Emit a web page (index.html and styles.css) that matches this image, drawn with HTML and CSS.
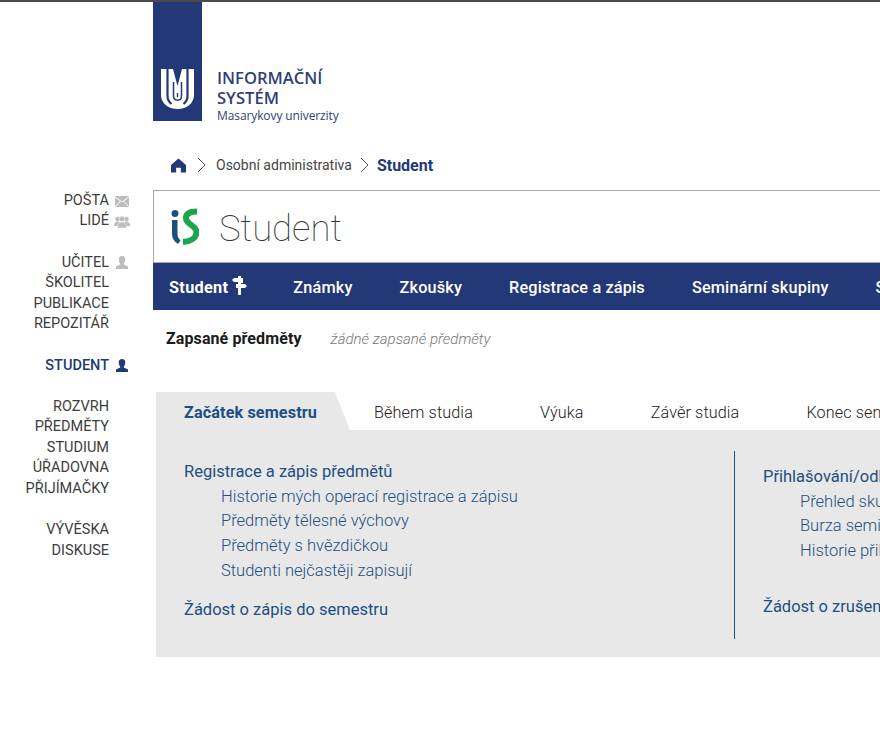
FILE: index.html
```html
<!DOCTYPE HTML>
<html lang="cs">
<head>
	<meta http-equiv="Content-Type" content="text/html; charset=utf-8">
	<title>Student</title>
	<link rel="stylesheet" href="styles.css">
</head>
<body>
<div class="page">
	<div class="side">
		<ul class="side-group">
			<li><a href="#">POŠTA</a><svg class="ico" viewBox="0 0 16 13"><path fill="#bdbdbd" d="M1 1h14v11H1z"/><path fill="none" stroke="#fff" d="M1 2l7 5 7-5M1 12l5.500-6M15 12L9.500 6"/></svg></li>
			<li><a href="#">LIDÉ</a><svg class="ico" viewBox="0 0 16 13"><g fill="#bdbdbd"><circle cx="3.500" cy="4" r="2.300"/><circle cx="12.500" cy="4" r="2.300"/><path d="M0 11c0-3 1.500-4.500 3.500-4.500S7 8 7 11zM9 11c0-3 1.500-4.500 3.500-4.500S16 8 16 11z"/><circle cx="8" cy="4" r="2.800" stroke="#fff" stroke-width=".5"/><path d="M3.500 13c0-4 2-6 4.500-6s4.500 2 4.500 6z" stroke="#fff" stroke-width=".5"/></g></svg></li>
		</ul>
		<ul class="side-group">
			<li><a href="#">UČITEL</a><svg class="ico ico-up" viewBox="0 0 16 13"><path fill="#bdbdbd" d="M8 0c2.200 0 3.300 1.500 3.300 3.500S10.300 7 9.800 7.500V8.500l4.200 2V13H2v-2.500l4.200-2V7.500C5.700 7 4.700 5.500 4.700 3.500S5.800 0 8 0z"/></svg></li>
			<li><a href="#">ŠKOLITEL</a></li>
			<li><a href="#">PUBLIKACE</a></li>
			<li><a href="#">REPOZITÁŘ</a></li>
		</ul>
		<ul class="side-group">
			<li class="active"><a href="#">STUDENT</a><svg class="ico ico-up" viewBox="0 0 16 13"><path fill="#233876" d="M8 0c2.200 0 3.300 1.500 3.300 3.500S10.300 7 9.800 7.500V8.500l4.200 2V13H2v-2.500l4.200-2V7.500C5.700 7 4.700 5.500 4.700 3.500S5.800 0 8 0z"/></svg></li>
		</ul>
		<ul class="side-group">
			<li><a href="#">ROZVRH</a></li>
			<li><a href="#">PŘEDMĚTY</a></li>
			<li><a href="#">STUDIUM</a></li>
			<li><a href="#">ÚŘADOVNA</a></li>
			<li><a href="#">PŘIJÍMAČKY</a></li>
		</ul>
		<ul class="side-group">
			<li><a href="#">VÝVĚSKA</a></li>
			<li><a href="#">DISKUSE</a></li>
		</ul>
	</div>

	<div class="main">
		<div class="brand">
			<div class="brand-box">
				<svg class="mu" viewBox="0 0 33 40">
					<path fill="#fff" d="M0 0H33V26C33 34 26 40 16.500 40S0 34 0 26Z"/>
					<path fill="none" stroke="#233876" stroke-width="2.200" d="M6.500 0V27C6.500 30 8 33 10.500 35M26.500 0V27C26.500 30 25 33 22.500 35"/>
					<path fill="#233876" d="M12 0h9l-4.500 17z"/>
					<path fill="none" stroke="#233876" stroke-width="1.500" d="M12.500 13V27c0 5.500 8 5.500 8 0V13"/>
					<path fill="#233876" d="M15.800 24h1.400v4h-1.400z"/>
				</svg>
			</div>
			<div class="brand-text">
				<div class="brand-name">INFORMAČNÍ<br>SYSTÉM</div>
				<div class="brand-sub">Masarykovy univerzity</div>
			</div>
		</div>

		<div class="crumbs">
			<svg class="home" viewBox="0 0 16 15"><path fill="#233876" d="M8 0l8 7v8h-5.500v-5h-5v5H0V7z"/></svg>
			<svg class="sep" viewBox="0 0 9 16"><path fill="none" stroke="#555" d="M1 1l7 7-7 7"/></svg>
			<a href="#">Osobní administrativa</a>
			<svg class="sep" viewBox="0 0 9 16"><path fill="none" stroke="#555" d="M1 1l7 7-7 7"/></svg>
			<b>Student</b>
		</div>

		<div class="head">
			<svg class="is" viewBox="0 0 28 37">
				<circle cx="4" cy="5.500" r="3.500" fill="#1c4f82"/>
				<path fill="#1c4f82" d="M1 12h5.500v14c0 2.500 1 4.500 3 6.500L7 36C3 33.500 1 30 1 26z"/>
				<path fill="none" stroke="#1aa64a" stroke-width="6" d="M26 3.500C19 3.500 15 5.500 15 10c0 7 10.500 7 10.500 14 0 6-6 9.500-13.500 10"/>
			</svg>
			<h1>Student</h1>
		</div>

		<div class="nav">
			<a class="on" href="#">Student<svg class="post" viewBox="0 0 15 19"><path fill="#fff" d="M6 0h3v2h2v5H9v1h4l2 2-2 2H9v7H6v-7H4V8h2V6H2L0 4l2-2h4z"/></svg></a>
			<a href="#">Známky</a>
			<a href="#">Zkoušky</a>
			<a href="#">Registrace a zápis</a>
			<a href="#">Seminární skupiny</a>
			<a href="#">Stud</a>
		</div>

		<div class="sub">
			<b>Zapsané předměty</b>
			<i>žádné zapsané předměty</i>
		</div>

		<div class="panel">
			<div class="tabs">
				<a class="tab-on" href="#">Začátek semestru</a>
				<a href="#">Během studia</a>
				<a href="#">Výuka</a>
				<a href="#">Závěr studia</a>
				<a href="#">Konec semestru</a>
			</div>
			<div class="cols">
				<div class="col">
					<a class="top" href="#">Registrace a zápis předmětů</a>
					<a class="item" href="#">Historie mých operací registrace a zápisu</a>
					<a class="item" href="#">Předměty tělesné výchovy</a>
					<a class="item" href="#">Předměty s hvězdičkou</a>
					<a class="item" href="#">Studenti nejčastěji zapisují</a>
					<a class="top gap" href="#">Žádost o zápis do semestru</a>
				</div>
				<div class="col col-right">
					<a class="top" href="#">Přihlašování/odhlašování</a>
					<a class="item" href="#">Přehled skupin</a>
					<a class="item" href="#">Burza seminárních skupin</a>
					<a class="item" href="#">Historie přihlašování</a>
					<a class="top gap" href="#">Žádost o zrušení</a>
				</div>
			</div>
		</div>
	</div>
</div>
</body>
</html>
```

FILE: styles.css
```css
*{
	margin: 0;
	padding: 0;
	box-sizing: border-box;
}
html, body{
	overflow: hidden;
	height: 100%;
	background: #fff;
}
body{
	font-family: Roboto, "Liberation Sans", sans-serif;
	border-top: 2px solid #4a4a4a;
}
a{
	text-decoration: none;
	color: inherit;
}
ul{
	list-style: none;
}
.page{
	display: flex;
	width: 1200px;
}

/* left menu */
.side{
	width: 153px;
	flex: none;
	padding-top: 188.800px;
	font-size: 14.500px;
	color: #3d3d3d;
}
.side-group{
	margin-bottom: 21.200px;
}
.side-group li{
	height: 20.400px;
	line-height: 20.400px;
	position: relative;
	text-align: right;
	padding-right: 44px;
}
.side-group .active{
	color: #233876;
	font-weight: 500;
}
.ico{
	position: absolute;
	left: 114px;
	top: 4px;
	width: 16px;
	height: 13px;
}
.ico-up{
	top: 3px;
}

/* logo */
.main{
	flex: 1;
}
.brand{
	display: flex;
	height: 119px;
}
.brand-box{
	width: 49px;
	height: 119px;
	background: #233876;
	padding: 67px 0 0 8px;
}
.mu{
	display: block;
	width: 33px;
	height: 40px;
}
.brand-text{
	padding: 66px 0 0 15px;
	color: #2f3f78;
	font-family: "Open Sans", sans-serif;
}
.brand-name{
	font-size: 16.600px;
	line-height: 20px;
	font-weight: 600;
}
.brand-sub{
	font-size: 12px;
	line-height: 16px;
	letter-spacing: -.1px;
}

/* breadcrumbs */
.crumbs{
	display: flex;
	align-items: center;
	height: 20px;
	margin-top: 34px;
	padding-left: 18px;
	font-size: 14px;
	color: #444;
}
.home{
	width: 15px;
	height: 15px;
	margin-right: 11px;
}
.sep{
	width: 9px;
	height: 16px;
	margin-right: 10px;
}
.crumbs a{
	margin-right: 8px;
}
.crumbs b{
	font-size: 16px;
	font-weight: 700;
	color: #233876;
	margin-left: -2px;
}

/* page title */
.head{
	display: flex;
	align-items: center;
	height: 73px;
	margin-top: 15px;
	border: 1px solid #aaa;
	border-right: 0;
	padding-left: 17px;
}
.is{
	width: 28px;
	height: 37px;
}
h1{
	font-weight: 100;
	font-size: 36.500px;
	color: #333;
	margin: 4px 0 0 20px;
}

/* main nav */
.nav{
	display: flex;
	gap: 47px;
	height: 47px;
	padding: 1px 0 0 16px;
	line-height: 47px;
	background: #233876;
	color: #fff;
	font-size: 16.300px;
	font-weight: 500;
	letter-spacing: .15px;
	white-space: nowrap;
}
.nav .on{
	font-weight: 700;
	letter-spacing: .3px;
	display: flex;
	align-items: flex-start;
	margin-right: -1px;
}
.post{
	width: 15px;
	height: 19px;
	margin: 12px 0 0 4px;
}

.sub{
	display: flex;
	align-items: center;
	height: 57px;
	padding-left: 13px;
}
.sub b{
	font-size: 16px;
	font-weight: 700;
	letter-spacing: .1px;
	color: #1a1a1a;
}
.sub i{
	font-size: 15px;
	font-weight: 300;
	color: #777;
	margin-left: 29px;
}

/* tabs */
.panel{
	margin: 25px 0 0 2px;
	height: 265px;
}
.tabs{
	display: flex;
	gap: 67px;
	height: 38px;
	line-height: 42px;
	font-size: 16.200px;
	font-weight: 300;
	letter-spacing: .12px;
	color: #222;
	white-space: nowrap;
}
.tabs .tab-on{
	margin-right: -43px;
	margin-left: 1px;
	padding: 0 33px 0 28px;
	font-weight: 700;
	color: #1c4f82;
	background: #e8e8e8;
	clip-path: polygon(0 0, 179px 0, 100% 100%, 0 100%);
}
.cols{
	display: flex;
	height: 227px;
	margin-left: 1px;
	background: #e8e8e8;
	padding: 21px 0 0 28px;
	white-space: nowrap;
}
.col{
	display: flex;
	flex-direction: column;
	width: 550px;
	height: 188px;
	padding-top: 9px;
	color: #1c4f82;
	font-size: 16.500px;
}
.col-right{
	border-left: 1px solid #1c4f82;
	padding: 14px 0 0 28px;
}
.top{
	line-height: 24.700px;
}
.item{
	line-height: 24.700px;
	padding-left: 37px;
	font-weight: 300;
}
.gap{
	margin-top: 14.300px;
}
.col-right .gap{
	margin-top: 31px;
}
```
